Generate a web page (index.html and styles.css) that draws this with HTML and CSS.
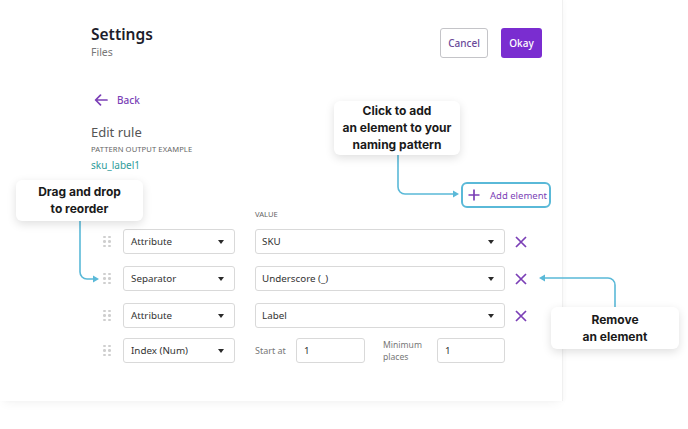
FILE: index.html
```html
<!DOCTYPE html>
<html>
<head>
<meta charset="utf-8">
<link rel="stylesheet" href="styles.css">
</head>
<body>
<div class="page">
  <div class="card">
    <header class="top">
      <div>
        <h1 class="title">Settings</h1>
        <div class="sub">Files</div>
      </div>
      <div class="actions">
        <button class="btn btn-cancel">Cancel</button>
        <button class="btn btn-okay">Okay</button>
      </div>
    </header>

    <div class="back">
      <svg class="back-icon" width="14" height="12" viewBox="0 0 14 12"><path d="M13 6H2M6.5 1.2L1.6 6l4.9 4.8" fill="none" stroke="#7b3fb6" stroke-width="1.7" stroke-linecap="round" stroke-linejoin="round"/></svg>
      <span>Back</span>
    </div>

    <h2 class="rule-title">Edit rule</h2>
    <div class="small-label">PATTERN OUTPUT EXAMPLE</div>
    <div class="example">sku_label1</div>

    <div class="add-wrap">
      <button class="add-btn">
        <svg width="12" height="12" viewBox="0 0 12 12"><path d="M6 0.5v11M0.5 6h11" stroke="#7b3fb6" stroke-width="1.7"/></svg>
        <span>Add element</span>
      </button>
    </div>

    <div class="col-head">VALUE</div>

    <div class="rows">
      <div class="row">
        <span class="handle"><i></i><i></i><i></i><i></i><i></i><i></i></span>
        <div class="select sel-type">Attribute<b class="caret"></b></div>
        <div class="select sel-value">SKU<b class="caret"></b></div>
        <svg class="remove" width="12" height="12" viewBox="0 0 12 12"><path d="M1 1l10 10M11 1L1 11" stroke="#7b3fb6" stroke-width="1.7"/></svg>
      </div>
      <div class="row">
        <span class="handle"><i></i><i></i><i></i><i></i><i></i><i></i></span>
        <div class="select sel-type">Separator<b class="caret"></b></div>
        <div class="select sel-value">Underscore (_)<b class="caret"></b></div>
        <svg class="remove" width="12" height="12" viewBox="0 0 12 12"><path d="M1 1l10 10M11 1L1 11" stroke="#7b3fb6" stroke-width="1.7"/></svg>
      </div>
      <div class="row">
        <span class="handle"><i></i><i></i><i></i><i></i><i></i><i></i></span>
        <div class="select sel-type">Attribute<b class="caret"></b></div>
        <div class="select sel-value">Label<b class="caret"></b></div>
        <svg class="remove" width="12" height="12" viewBox="0 0 12 12"><path d="M1 1l10 10M11 1L1 11" stroke="#7b3fb6" stroke-width="1.7"/></svg>
      </div>
      <div class="row row-last">
        <span class="handle"><i></i><i></i><i></i><i></i><i></i><i></i></span>
        <div class="select sel-type">Index (Num)<b class="caret"></b></div>
        <div class="index-fields">
          <span class="field-label lbl-start">Start at</span>
          <div class="input in-start">1</div>
          <span class="field-label lbl-min">Minimum<br>places</span>
          <div class="input in-min">1</div>
        </div>
      </div>
    </div>
  </div>

  <svg class="connectors" width="688" height="429" viewBox="0 0 688 429">
    <g fill="none" stroke="#5ab9d8" stroke-width="1.6">
      <path d="M398 155V187a7 7 0 0 0 7 7H454"/>
      <path d="M80 221V272a7 7 0 0 0 7 7H94"/>
      <path d="M615 307V285a7 7 0 0 0 -7 -7H544"/>
    </g>
    <g fill="#5ab9d8">
      <path d="M459 194l-6 -3.5v7z"/>
      <path d="M99 279l-6 -3.5v7z"/>
      <path d="M539 278l6 -3.5v7z"/>
    </g>
  </svg>

  <div class="callout co-add">Click to add<br>an element to your<br>naming pattern</div>
  <div class="callout co-drag">Drag and drop<br>to reorder</div>
  <div class="callout co-remove">Remove<br>an element</div>
</div>
</body>
</html>
```
FILE: styles.css
```css
* { box-sizing: border-box; margin: 0; padding: 0; }
html, body { width: 688px; height: 429px; overflow: hidden; background: #ffffff; }
body { font-family: "Noto Sans", "Open Sans", sans-serif; color: #333; }

.page { position: relative; width: 688px; height: 429px; }

.card {
  width: 563px;
  height: 401px;
  padding: 23px 20px 0 91px;
  background: #fff;
  border-right: 1px solid #f0f0f0;
  box-shadow: 0 6px 10px -4px rgba(0,0,0,0.05), 2px 0 4px rgba(0,0,0,0.02);
}

.top { display: flex; justify-content: space-between; align-items: flex-start; }
.title { font-size: 15.5px; line-height: 22px; font-weight: 600; color: #1d1d2b; }
.sub { font-size: 10.5px; line-height: 14px; color: #777; margin-top: 0; }

.actions { display: flex; gap: 13px; margin-top: 5px; }
.btn {
  height: 30px;
  border-radius: 3px;
  font-family: "Noto Sans", sans-serif;
  font-size: 10px;
  font-weight: 500;
}
.btn-cancel { width: 48px; background: #fff; border: 1px solid #c4c4c8; color: #6a4a99; }
.btn-okay { width: 41px; background: #7a2dd0; border: none; color: #fff; }

.back { display: flex; align-items: center; gap: 9px; margin-top: 34px; margin-left: 3px; height: 14px; }
.back span { font-size: 10px; font-weight: 500; color: #7b3fb6; }

.rule-title { margin-top: 16px; font-size: 13px; line-height: 18px; font-weight: 400; color: #555; }
.small-label { margin-top: 3px; font-size: 7.6px; line-height: 11px; color: #666; letter-spacing: 0.1px; }
.example { margin-top: 3px; font-size: 10px; line-height: 14px; color: #2e9c9a; }

.add-wrap { display: flex; justify-content: flex-end; margin-top: 10px; margin-right: -9px; }
.add-btn {
  display: flex;
  align-items: center;
  gap: 10px;
  width: 90px;
  height: 26px;
  padding-left: 5px;
  background: #fff;
  border: 2px solid #5ab9d8;
  border-radius: 6px;
  font-family: "Noto Sans", sans-serif;
  font-size: 9.5px;
  color: #7b3fb6;
  white-space: nowrap;
}

.col-head { margin-top: 0; margin-left: 164px; font-size: 7.6px; line-height: 12px; color: #666; }

.rows { display: flex; flex-direction: column; gap: 12px; margin-top: 9px; padding-left: 12px; }
.row { display: flex; align-items: center; height: 25px; }
.row-last { margin-top: -2px; }

.handle {
  display: grid;
  grid-template-columns: 2.5px 2.5px;
  grid-template-rows: 2.5px 2.5px 2.5px;
  column-gap: 2.5px;
  row-gap: 2px;
  margin-right: 12.5px;
}
.handle i { display: block; width: 2.5px; height: 2.5px; border-radius: 50%; background: #cfcfcf; }

.select {
  position: relative;
  display: flex;
  align-items: center;
  height: 25px;
  border: 1px solid #d9d9d9;
  border-radius: 3px;
  background: #fff;
  font-size: 9.8px;
  color: #333;
}
.sel-type { width: 112px; padding-left: 7px; }
.sel-value { width: 250px; padding-left: 6px; margin-left: 20px; }
.caret {
  position: absolute;
  right: 10px;
  top: 10px;
  width: 0; height: 0;
  border-left: 3.5px solid transparent;
  border-right: 3.5px solid transparent;
  border-top: 4px solid #2a2a2a;
}
.remove { margin-left: 10px; }

.index-fields { display: flex; align-items: center; margin-left: 20px; }
.field-label { font-size: 9px; color: #777; line-height: 12px; }
.lbl-start { width: 41px; }
.lbl-min { width: 54px; font-size: 8.6px; }
.input {
  height: 25px;
  display: flex;
  align-items: center;
  border: 1px solid #d9d9d9;
  border-radius: 3px;
  font-size: 9.8px;
  color: #333;
  padding-left: 7px;
}
.in-start { width: 69px; margin-right: 18px; }
.in-min { width: 68px; }

.connectors { position: absolute; left: 0; top: 0; }

.callout {
  position: absolute;
  background: #fff;
  border-radius: 6px;
  box-shadow: 0 3px 10px rgba(0,0,0,0.13);
  font-family: "Inter", "Liberation Sans", sans-serif;
  font-weight: 700;
  font-size: 12px;
  line-height: 17px;
  color: #1a1a1a;
  text-align: center;
}
.co-add { left: 334px; top: 101px; width: 126px; height: 54px; padding-top: 1px; }
.co-drag { left: 16px; top: 180px; width: 127px; height: 41px; padding-top: 3px; }
.co-remove { left: 551px; top: 307px; width: 128px; height: 42px; padding-top: 4px; }
```
